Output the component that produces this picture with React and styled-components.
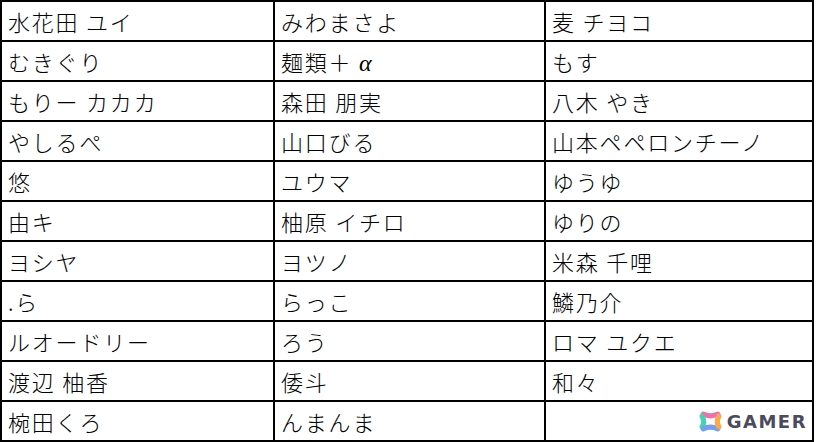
import React from "react";
import styled, { createGlobalStyle } from "styled-components";

const rows = [
  ["水花田 ユイ", "みわまさよ", "麦 チヨコ"],
  ["むきぐり", "麺類＋ α", "もす"],
  ["もりー カカカ", "森田 朋実", "八木 やき"],
  ["やしるぺ", "山口びる", "山本ペペロンチーノ"],
  ["悠", "ユウマ", "ゆうゆ"],
  ["由キ", "柚原 イチロ", "ゆりの"],
  ["ヨシヤ", "ヨツノ", "米森 千哩"],
  [".ら", "らっこ", "鱗乃介"],
  ["ルオードリー", "ろう", "ロマ ユクエ"],
  ["渡辺 柚香", "倭斗", "和々"],
  ["椀田くろ", "んまんま", ""],
];

const colWidths = [273, 271, 268];

const GlobalStyle = createGlobalStyle`
  body {
    margin: 0;
    background: #fff;
    font-family: "Noto Sans CJK JP", "Noto Sans", sans-serif;
  }
`;

const Page = styled.div`
  position: relative;
  width: 816px;
  height: 442px;
  overflow: hidden;
  background: #fff;
`;

const Table = styled.table`
  width: 812px;
  border-collapse: collapse;
  table-layout: fixed;
  border: 2px solid #000;
`;

const Cell = styled.td`
  border: 2px solid #000;
  height: 38px;
  padding: 0 0 0 6px;
  font-size: 22px;
  font-weight: 300;
  letter-spacing: 1.8px;
  line-height: 38px;
  color: #000;
  white-space: nowrap;
  overflow: hidden;
`;

const Alpha = styled.span`
  font-family: "Liberation Serif", serif;
  font-style: italic;
  font-size: 24px;
  line-height: 1;
`;

const Watermark = styled.div`
  position: absolute;
  right: 9px;
  bottom: 9px;
  display: flex;
  align-items: center;
  gap: 4px;
`;

const Brand = styled.span`
  font-family: "DejaVu Sans", sans-serif;
  font-weight: bold;
  font-size: 18px;
  letter-spacing: 1.5px;
  color: #4b4a5e;
  line-height: 1;
`;

const LogoMark = () => (
  <svg width="25" height="23" viewBox="0 0 24 22">
    <path d="M5 4 Q12 7 19 4" stroke="#f26fae" strokeWidth="5" fill="none" strokeLinecap="round" />
    <path d="M4 6 Q7 11 4 16" stroke="#45d3b4" strokeWidth="5" fill="none" strokeLinecap="round" />
    <path d="M5 18 Q12 15 19 18" stroke="#739ef5" strokeWidth="5" fill="none" strokeLinecap="round" />
    <path d="M20 6 Q17 11 20 16" stroke="#f8a94c" strokeWidth="5" fill="none" strokeLinecap="round" />
  </svg>
);

const renderText = (c) =>
  c.endsWith("α") ? (
    <>
      {c.slice(0, -1)}
      <Alpha>α</Alpha>
    </>
  ) : (
    c
  );

export default function App() {
  return (
    <Page>
      <GlobalStyle />
      <Table>
        <colgroup>
          {colWidths.map((w, i) => (
            <col key={i} style={{ width: w }} />
          ))}
        </colgroup>
        <tbody>
          {rows.map((r, i) => (
            <tr key={i}>
              {r.map((c, j) => (
                <Cell key={j}>{renderText(c)}</Cell>
              ))}
            </tr>
          ))}
        </tbody>
      </Table>
      <Watermark>
        <LogoMark />
        <Brand>GAMER</Brand>
      </Watermark>
    </Page>
  );
}
